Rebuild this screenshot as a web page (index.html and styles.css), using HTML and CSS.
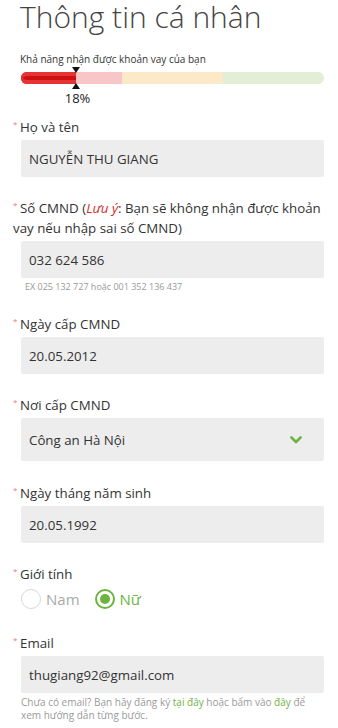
FILE: index.html
```html
<!DOCTYPE html>
<html lang="vi">

<head>
  <meta charset="UTF-8" />
  <meta name="viewport" content="width=device-width, initial-scale=1.0" />
  <title>Thông tin cá nhân</title>
  <link rel="stylesheet" href="styles.css">
</head>

<body>
  <div class="page">
    <h1>Thông tin cá nhân</h1>

    <!-- Loan chance meter -->
    <div class="meter">
      <p class="meter-label">Khả năng nhận được khoản vay của bạn</p>
      <div class="meter-bar">
        <div class="meter-zone zone-red"></div>
        <div class="meter-zone zone-yellow"></div>
        <div class="meter-zone zone-green"></div>
        <div class="meter-fill" style="width: 18%;"></div>
        <div class="meter-pin" style="left: 18%;"></div>
      </div>
      <div class="meter-value"><span style="left: 18%;">18%</span></div>
    </div>

    <div class="field">
      <label class="field-label"><span class="req">*</span>Họ và tên</label>
      <div class="input">NGUYỄN THU GIANG</div>
    </div>

    <div class="field">
      <label class="field-label"><span class="req">*</span>Số CMND (<span class="note">Lưu ý</span>: Bạn sẽ không nhận được khoản vay nếu nhập sai số CMND)</label>
      <div class="input">032 624 586</div>
      <p class="hint">EX 025 132 727 hoặc 001 352 136 437</p>
    </div>

    <div class="field">
      <label class="field-label"><span class="req">*</span>Ngày cấp CMND</label>
      <div class="input">20.05.2012</div>
    </div>

    <div class="field field-select">
      <label class="field-label"><span class="req">*</span>Nơi cấp CMND</label>
      <div class="input select">
        <span>Công an Hà Nội</span>
        <svg class="chevron" width="12" height="8" viewBox="0 0 12 8">
          <path d="M1.5 1.5 L6 6 L10.5 1.5" fill="none" stroke="#6db33f" stroke-width="2.6" stroke-linecap="round" stroke-linejoin="round" />
        </svg>
      </div>
    </div>

    <div class="field">
      <label class="field-label"><span class="req">*</span>Ngày tháng năm sinh</label>
      <div class="input">20.05.1992</div>
    </div>

    <div class="field field-radio">
      <label class="field-label"><span class="req">*</span>Giới tính</label>
      <div class="radios">
        <span class="radio"><span class="dot"></span>Nam</span>
        <span class="radio checked"><span class="dot"></span>Nữ</span>
      </div>
    </div>

    <div class="field">
      <label class="field-label"><span class="req">*</span>Email</label>
      <div class="input">thugiang92@gmail.com</div>
      <p class="hint hint-wrap">Chưa có email? Bạn hãy đăng ký <a href="#">tại đây</a> hoặc bấm vào <a href="#">đây</a> để xem hướng dẫn từng bước.</p>
    </div>
  </div>
</body>

</html>
```

FILE: styles.css
```css
/* Base */
body {
  margin: 0;
  background-color: #ffffff;
  color: #333;
  font-family: 'Open Sans', 'Noto Sans', sans-serif;
}

.page {
  padding: 0 14px 0 21px;
}

h1 {
  margin: -3px 0 0 -1px;
  font-size: 30px;
  font-weight: 300;
  line-height: 40px;
  color: #444;
}

/* Meter */
.meter {
  margin-top: 15px;
}

.meter-label {
  margin: 0 0 6px -1px;
  font-size: 10px;
  line-height: 14px;
  color: #333;
}

.meter-bar {
  position: relative;
  display: flex;
  height: 12px;
  margin-top: 2px;
  border-radius: 6px;
}

.meter-zone {
  flex: 1;
  height: 100%;
}

.zone-red {
  background-color: #f8c6c6;
  border-radius: 6px 0 0 6px;
}

.zone-yellow {
  background-color: #fbe9c8;
}

.zone-green {
  background-color: #e2efd6;
  border-radius: 0 6px 6px 0;
}

.meter-fill {
  position: absolute;
  left: 0;
  top: 0;
  height: 100%;
  background-color: #cf1010;
  border-radius: 6px 0 0 6px;
  box-shadow: inset 0 -4px 0 #e63434, inset 0 4px 0 #e63434;
}

.meter-pin {
  position: absolute;
  top: -5px;
  width: 0;
  height: 22px;
}

.meter-pin::before,
.meter-pin::after {
  content: "";
  position: absolute;
  left: -4px;
  border-left: 4px solid transparent;
  border-right: 4px solid transparent;
}

.meter-pin::before {
  top: 0;
  border-top: 6px solid #111;
}

.meter-pin::after {
  bottom: 0;
  border-bottom: 6px solid #111;
}

.meter-value {
  position: relative;
  height: 18px;
  margin-top: 5px;
}

.meter-value span {
  position: absolute;
  top: 0;
  transform: translateX(-50%);
  font-size: 13px;
  line-height: 18px;
  color: #222;
  margin-left: 2px;
}

/* Form fields */
.field {
  margin-top: 10px;
}

.field+.field {
  margin-top: 21px;
}

.field-select {
  padding-bottom: 1px;
}

.field-radio {
  padding-bottom: 3px;
}

.field-label {
  display: block;
  margin: 0 0 3px -8px;
  font-size: 13.3px;
  line-height: 20px;
  color: #333;
}

.req {
  display: inline-block;
  width: 7px;
  font-size: 8px;
  line-height: 8px;
  vertical-align: top;
  margin-top: 3px;
  color: #e77a7a;
}

.note {
  color: #d62b2b;
  font-style: italic;
}

.input {
  height: 37px;
  padding: 0 8px;
  background-color: #ededed;
  border-radius: 2px;
  display: flex;
  align-items: center;
  font-size: 13.3px;
  color: #333;
}

.select {
  height: 43px;
  justify-content: space-between;
  padding-right: 22px;
}

.chevron {
  margin-top: 1px;
}

.hint {
  margin: 2px 0 0 4px;
  font-size: 9px;
  line-height: 13px;
  color: #999;
}

.hint-wrap {
  margin: 3px 0 0 0;
  font-size: 10px;
  color: #9a9a9a;
}

.hint a {
  color: #6db33f;
  text-decoration: none;
}

/* Radios */
.radios {
  display: flex;
  gap: 15px;
  margin-top: 5px;
  height: 20px;
  align-items: center;
}

.radio {
  display: flex;
  align-items: center;
  gap: 5px;
  font-size: 15px;
  color: #aaa;
}

.radio .dot {
  box-sizing: border-box;
  width: 20px;
  height: 20px;
  border-radius: 50%;
  border: 1px solid #d8d8d8;
  position: relative;
}

.radio.checked {
  color: #6db33f;
}

.radio.checked .dot {
  border: 2px solid #6db33f;
}

.radio.checked .dot::after {
  content: "";
  position: absolute;
  top: 3px;
  left: 3px;
  width: 10px;
  height: 10px;
  border-radius: 50%;
  background-color: #6db33f;
}
```
